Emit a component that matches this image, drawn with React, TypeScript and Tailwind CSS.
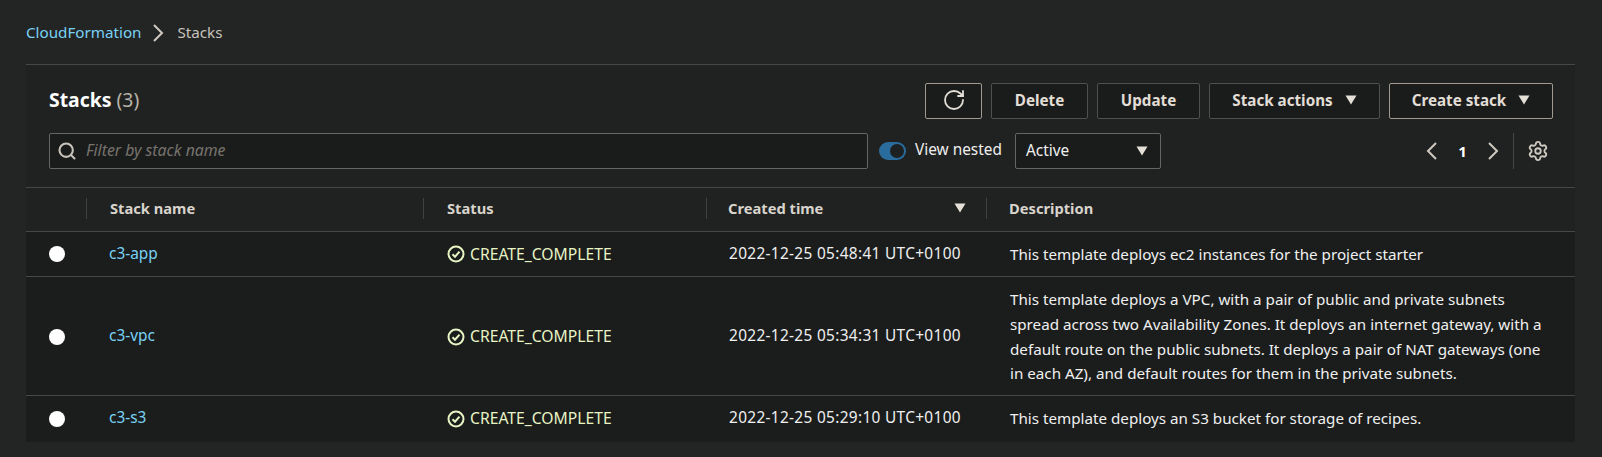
import { RotateCw, Search, Settings } from "lucide-react";

const font = "font-['Noto_Sans',sans-serif]";

const rows = [
  {
    name: "c3-app",
    created: "2022-12-25 05:48:41 UTC+0100",
    description: ["This template deploys ec2 instances for the project starter"],
  },
  {
    name: "c3-vpc",
    created: "2022-12-25 05:34:31 UTC+0100",
    description: [
      "This template deploys a VPC, with a pair of public and private subnets",
      "spread across two Availability Zones. It deploys an internet gateway, with a",
      "default route on the public subnets. It deploys a pair of NAT gateways (one",
      "in each AZ), and default routes for them in the private subnets.",
    ],
  },
  {
    name: "c3-s3",
    created: "2022-12-25 05:29:10 UTC+0100",
    description: ["This template deploys an S3 bucket for storage of recipes."],
  },
];

const Caret = ({ className = "" }: { className?: string }) => (
  <svg viewBox="0 0 12 10" className={`h-[10px] w-[12px] ${className}`} fill="#e4e0d8">
    <path d="M0.5 0.5h11L6 9.5z" />
  </svg>
);

const Chevron = ({ left = false }: { left?: boolean }) => (
  <svg viewBox="0 0 11 18" className="h-[18px] w-[11px]" fill="none" stroke="#cfcac1" strokeWidth="2">
    <path d={left ? "M10 1L2 9l8 8" : "M1 1l8 8-8 8"} />
  </svg>
);

const Button = ({ children, className = "" }: { children: React.ReactNode; className?: string }) => (
  <button className={`flex h-[36px] items-center justify-center rounded-[2px] border bg-[#1a1c1c] pb-[2px] text-[15.2px] font-bold text-[#e2ded6] ${className}`}>
    {children}
  </button>
);

const HeaderCell = ({ children, className = "pl-[23px]" }: { children?: React.ReactNode; className?: string }) => (
  <div className={`flex h-[21px] items-center justify-between border-l border-[#3f4242] pr-[20px] text-[14.7px] font-bold text-[#d8d4cc] ${className}`}>
    {children}
  </div>
);

export default function App() {
  return (
    <div className={`h-[457px] w-[1602px] overflow-hidden bg-[#232525] pl-[26px] pr-[27px] ${font}`}>
      <nav className="flex h-[64px] items-center pt-[1px] text-[15.2px]">
        <span className="text-[#79d2f5]">CloudFormation</span>
        <span className="ml-[12px] mr-[13px] flex">
          <Chevron />
        </span>
        <span className="text-[#c8c4bc]">Stacks</span>
      </nav>

      <section className="border-t border-[#454848] bg-[#202222]">
        <div className="flex h-[122px] flex-col pl-[23px] pr-[22px] pt-[18px]">
          <div className="flex h-[36px] items-center">
            <h2 className="-mt-[3px] text-[19.4px] font-bold leading-none text-white">
              Stacks <span className="font-normal text-[#b8b2a8]">(3)</span>
            </h2>
            <div className="ml-auto flex gap-[9px]">
              <Button className="w-[57px] border-[#a09a90]">
                <RotateCw className="h-[24px] w-[24px]" strokeWidth={1.8} />
              </Button>
              <Button className="w-[97px] border-[#4e5050]">Delete</Button>
              <Button className="w-[103px] border-[#4e5050]">Update</Button>
              <Button className="w-[171px] gap-[12px] border-[#4e5050]">
                Stack actions <Caret />
              </Button>
              <Button className="w-[164px] gap-[12px] border-[#a09a90]">
                Create stack <Caret />
              </Button>
            </div>
          </div>

          <div className="mt-[14px] flex h-[36px] items-center">
            <div className="flex h-[36px] w-[819px] items-center rounded-[2px] border border-[#646666] bg-[#1a1c1c] pl-[7px]">
              <Search className="h-[20px] w-[20px] text-[#c8c4bc]" strokeWidth={2.5} />
              <span className="ml-[9px] text-[15.8px] italic text-[#77736c]">Filter by stack name</span>
            </div>
            <div className="ml-[11px] flex h-[18px] w-[27px] items-center justify-end rounded-full bg-[#2a6c9c] pr-[2px]">
              <div className="h-[14px] w-[14px] rounded-full bg-[#1e2122]" />
            </div>
            <span className="ml-[9px] -mt-[2px] text-[15.4px] text-[#eeeeee]">View nested</span>
            <div className="ml-[13px] flex h-[36px] w-[146px] items-center justify-between rounded-[2px] border border-[#646666] bg-[#1a1c1c] pl-[10px] pr-[12px] text-[15.4px] text-[#f0f0f0]">
              Active <Caret />
            </div>
            <div className="ml-auto flex h-[36px] items-center">
              <Chevron left />
              <span className="mx-[18px] w-[15px] text-center text-[15px] font-bold text-white">1</span>
              <Chevron />
              <div className="ml-[14px] h-[36px] w-px bg-[#454848]" />
              <Settings className="ml-[13px] mr-[4px] h-[22px] w-[22px] text-[#cfcac1]" strokeWidth={2} />
            </div>
          </div>
        </div>

        <div className="grid h-[44px] grid-cols-[60px_337px_283px_280px_1fr] items-center border-t border-[#454848] pb-[3px]">
          <div />
          <HeaderCell>Stack name</HeaderCell>
          <HeaderCell>Status</HeaderCell>
          <HeaderCell className="pl-[21px]">
            Created time <Caret />
          </HeaderCell>
          <HeaderCell className="pl-[22px]">Description</HeaderCell>
        </div>

        {rows.map((row) => (
          <div
            key={row.name}
            className="grid grid-cols-[60px_337px_283px_280px_1fr] items-center border-t border-[#454848] bg-[#1b1d1d] pb-[9.5px] pt-[10px] leading-[24.67px] last:pb-[11px]"
          >
            <div className="flex justify-center pl-[1px]">
              <div className="h-[16px] w-[16px] rounded-full bg-white" />
            </div>
            <div className="pl-[23px] text-[15.4px] text-[#79d2f5]">{row.name}</div>
            <div className="flex items-center gap-[5px] pl-[24px] text-[15.7px] text-[#e8f4c4]">
              <svg viewBox="0 0 18 18" className="h-[18px] w-[18px]" fill="none" stroke="#e8f4c4" strokeWidth="2">
                <circle cx="9" cy="9" r="7.5" />
                <path d="M5.5 9.2l2.5 2.5 4.5-5" />
              </svg>
              CREATE_COMPLETE
            </div>
            <div className="pl-[23px] text-[15.4px] tracking-[0.33px] text-[#f0f0f0]">{row.created}</div>
            <div className="pl-[24px] text-[15.2px] text-[#f0f0f0]">
              {row.description.map((line) => (
                <div key={line} className="whitespace-nowrap">{line}</div>
              ))}
            </div>
          </div>
        ))}
      </section>
    </div>
  );
}
